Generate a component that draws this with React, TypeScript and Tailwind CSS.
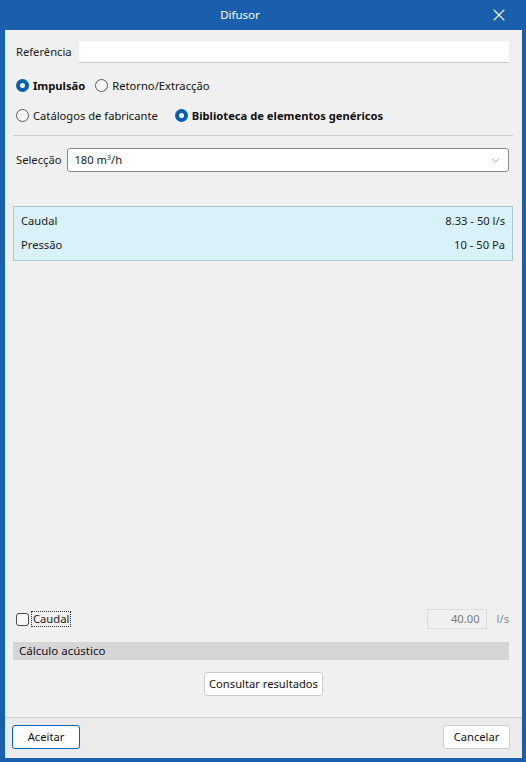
import { X, ChevronDown } from 'lucide-react';

function Radio({ label, checked }: { label: string; checked?: boolean }) {
  return (
    <div className="flex items-center gap-[4px]">
      {checked ? (
        <span className="w-[13px] h-[13px] rounded-full bg-[#005fb8] flex items-center justify-center">
          <span className="w-[5px] h-[5px] rounded-full bg-white" />
        </span>
      ) : (
        <span className="w-[13px] h-[13px] rounded-full border border-[#5a5a5a] bg-[#f6f6f6]" />
      )}
      <span className={checked ? 'font-bold text-[#111]' : 'text-[#111]'}>{label}</span>
    </div>
  );
}

export default function App() {
  return (
    <div
      className="w-[526px] h-[762px] bg-[#1a5fab] flex flex-col text-[11.2px] text-[#1b1b1b]"
      style={{ fontFamily: '"Noto Sans", "Open Sans", sans-serif' }}
    >
      {/* title bar */}
      <div className="h-[30px] flex items-center text-white">
        <div className="flex-1 text-center pl-[4px] text-[11.5px]">Difusor</div>
        <div className="w-[46px] flex items-center justify-center mr-[4px]">
          <X className="w-[20px] h-[20px]" strokeWidth={1.3} />
        </div>
      </div>

      <div className="flex-1 ml-[5px] mr-[4px] mb-[4px] bg-[#f0f0f0] flex flex-col">
        <div className="flex items-center mt-[11px] pl-[11px] pr-[13px] h-[22px]">
          <span className="mr-[7px]">Referência</span>
          <div className="flex-1 h-[22px] bg-white border-b border-[#c8c8c8]" />
        </div>

        <div className="flex items-center gap-[10px] pl-[11px] mt-[14px] h-[18px]">
          <Radio label="Impulsão" checked />
          <Radio label="Retorno/Extracção" />
        </div>

        <div className="flex items-center gap-[17px] pl-[11px] mt-[12px] h-[18px]">
          <Radio label="Catálogos de fabricante" />
          <Radio label="Biblioteca de elementos genéricos" checked />
        </div>

        <div className="ml-[8px] mr-[9px] mt-[10px] border-t border-[#cfcfcf]" />

        <div className="flex items-center mt-[12px] pl-[11px] pr-[13px]">
          <span className="mr-[6px]">Selecção</span>
          <div className="flex-1 h-[24px] bg-white border border-[#8a8a8a] rounded-[3px] flex items-center justify-between pl-[6px] pr-[6px]">
            <span>
              180 m<sup className="text-[7px]">3</sup>/h
            </span>
            <ChevronDown className="w-[13px] h-[13px] text-[#666]" strokeWidth={1.1} />
          </div>
        </div>

        <div className="ml-[8px] mr-[9px] mt-[34px] h-[55px] bg-[#d9f1f8] border border-[#a9c9d3] flex flex-col justify-center gap-[7px] px-[7px]">
          <div className="flex justify-between">
            <span>Caudal</span>
            <span>8.33 - 50 l/s</span>
          </div>
          <div className="flex justify-between">
            <span>Pressão</span>
            <span>10 - 50 Pa</span>
          </div>
        </div>

        <div className="flex-1" />

        <div className="flex items-center pl-[11px] pr-[13px] h-[20px] mb-[13px]">
          <span className="w-[13px] h-[13px] rounded-[3px] border border-[#4a4a4a] bg-[#f6f6f6]" />
          <span className="ml-[2px] px-[1px] border border-dotted border-[#333] leading-[14px]">Caudal</span>
          <div className="flex-1" />
          <div className="w-[60px] h-[20px] border border-[#dcdcdc] bg-[#f0f0f0] text-right pr-[6px] leading-[18px] text-[#7a7a7a]">
            40.00
          </div>
          <span className="ml-[10px] text-[#8a8a8a]">l/s</span>
        </div>

        <div className="ml-[8px] mr-[13px] h-[18px] bg-[#d6d6d6] flex items-center pl-[6px] text-[#111] text-[11.5px]">
          Cálculo acústico
        </div>

        <div className="flex justify-center mt-[12px]">
          <button className="h-[24px] px-[4px] bg-white border border-[#cdcdcd] rounded-[3px] text-[#111]">
            Consultar resultados
          </button>
        </div>

        <div className="mt-[21px] border-t border-[#d4d4d4] bg-[#ebebeb] flex justify-between items-center pl-[7px] pr-[12px] pt-[7px] pb-[9px]">
          <button className="w-[68px] h-[24px] bg-white border border-[#0067c0] rounded-[3px] text-[#111]">
            Aceitar
          </button>
          <button className="w-[67px] h-[24px] bg-white border border-[#d0d0d0] rounded-[3px] text-[#111]">
            Cancelar
          </button>
        </div>
      </div>
    </div>
  );
}
